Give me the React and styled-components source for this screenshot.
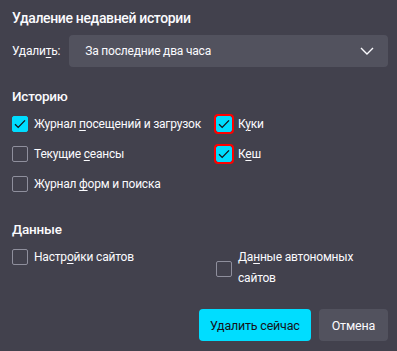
import React from "react";
import styled, { createGlobalStyle } from "styled-components";

const GlobalStyle = createGlobalStyle`
  html, body {
    margin: 0;
    padding: 0;
    background: #42414d;
  }
  body {
    font-family: Roboto, "Noto Sans", sans-serif;
    color: #fbfbfe;
    font-size: 12px;
    letter-spacing: -0.2px;
  }
`;

const Dialog = styled.div`
  width: 397px;
  height: 351px;
  box-sizing: border-box;
  padding: 8px 9px 10px 12px;
  display: flex;
  flex-direction: column;
`;

const Title = styled.h1`
  margin: 0;
  font-size: 14px;
  font-weight: 500;
  line-height: 20px;
  letter-spacing: -0.35px;
`;

const RangeRow = styled.div`
  display: flex;
  align-items: center;
  gap: 9px;
  margin-top: 7px;
`;

const Select = styled.div`
  flex: 1;
  height: 32px;
  background: #52525e;
  border-radius: 4px;
  display: flex;
  align-items: center;
  justify-content: space-between;
  padding: 0 14px 0 16px;
`;

const Section = styled.h2`
  margin: 0;
  font-size: 13.5px;
  font-weight: 500;
  line-height: 20px;
  letter-spacing: -0.2px;
  margin-top: ${(p) => p.$top}px;
`;

const Grid = styled.div`
  display: grid;
  grid-template-columns: 204px 1fr;
  row-gap: 10px;
  margin-top: ${(p) => p.$top}px;
  align-items: start;
`;

const Option = styled.label`
  display: flex;
  align-items: ${(p) => (p.$center ? "center" : "flex-start")};
  gap: 6px;
  line-height: 20px;
  min-height: 20px;
  white-space: nowrap;
`;

const Box = styled.span`
  flex: none;
  width: 16px;
  height: 16px;
  box-sizing: border-box;
  margin-top: 2px;
  border-radius: 2px;
  border: 1px solid ${(p) => (p.$checked ? "#00ddff" : "#8f8f9d")};
  background: ${(p) => (p.$checked ? "#00ddff" : "transparent")};
  display: flex;
  align-items: center;
  justify-content: center;
  outline: ${(p) => (p.$mark ? "2px solid #ff0000" : "none")};
  outline-offset: 0;
`;

const Key = styled.span`
  text-decoration: underline;
  text-underline-offset: 2px;
`;

const Lines = styled.span`
  display: flex;
  flex-direction: column;
  line-height: 21px;
`;

const Footer = styled.div`
  margin-top: auto;
  display: flex;
  justify-content: flex-end;
  gap: 8px;
`;

const Button = styled.button`
  height: 32px;
  border: none;
  border-radius: 4px;
  padding: 0 ${(p) => (p.$primary ? 11 : 13)}px;
  font-family: inherit;
  font-size: 12.5px;
  letter-spacing: -0.2px;
  background: ${(p) => (p.$primary ? "#00ddff" : "#52525e")};
  color: ${(p) => (p.$primary ? "#15141a" : "#fbfbfe")};
`;

const Check = () => (
  <svg width="12" height="10" viewBox="0 0 12 10">
    <path d="M1 5.2 L4.2 8.4 L11 1.4" fill="none" stroke="#15141a" strokeWidth="1.3" />
  </svg>
);

const Checkbox = ({ checked, mark, children, center }) => (
  <Option $center={center}>
    <Box $checked={checked} $mark={mark}>
      {checked && <Check />}
    </Box>
    {children}
  </Option>
);

const Chevron = () => (
  <svg width="14" height="8" viewBox="0 0 14 8">
    <path d="M1 1 L7 7 L13 1" fill="none" stroke="#fbfbfe" strokeWidth="1.4" />
  </svg>
);

export default function App() {
  return (
    <>
      <GlobalStyle />
      <Dialog>
        <Title>Удаление недавней истории</Title>
        <RangeRow>
          <span>
            Удали<Key>т</Key>ь:
          </span>
          <Select>
            <span>За последние два часа</span>
            <Chevron />
          </Select>
        </RangeRow>

        <Section $top={19}>Историю</Section>
        <Grid $top={8}>
          <Checkbox checked>
            <span>
              Журнал <Key>п</Key>осещений и загрузок
            </span>
          </Checkbox>
          <Checkbox checked mark>
            <span>
              К<Key>у</Key>ки
            </span>
          </Checkbox>
          <Checkbox>
            <span>
              Текущие <Key>с</Key>еансы
            </span>
          </Checkbox>
          <Checkbox checked mark>
            <span>
              К<Key>е</Key>ш
            </span>
          </Checkbox>
          <Checkbox>
            <span>
              Журнал <Key>ф</Key>орм и поиска
            </span>
          </Checkbox>
        </Grid>

        <Section $top={25}>Данные</Section>
        <Grid $top={8}>
          <Checkbox>
            <span>
              Настр<Key>о</Key>йки сайтов
            </span>
          </Checkbox>
          <Checkbox center>
            <Lines>
              <span>
                Да<Key>н</Key>ные автономных
              </span>
              <span>сайтов</span>
            </Lines>
          </Checkbox>
        </Grid>

        <Footer>
          <Button $primary>Удалить сейчас</Button>
          <Button>Отмена</Button>
        </Footer>
      </Dialog>
    </>
  );
}
